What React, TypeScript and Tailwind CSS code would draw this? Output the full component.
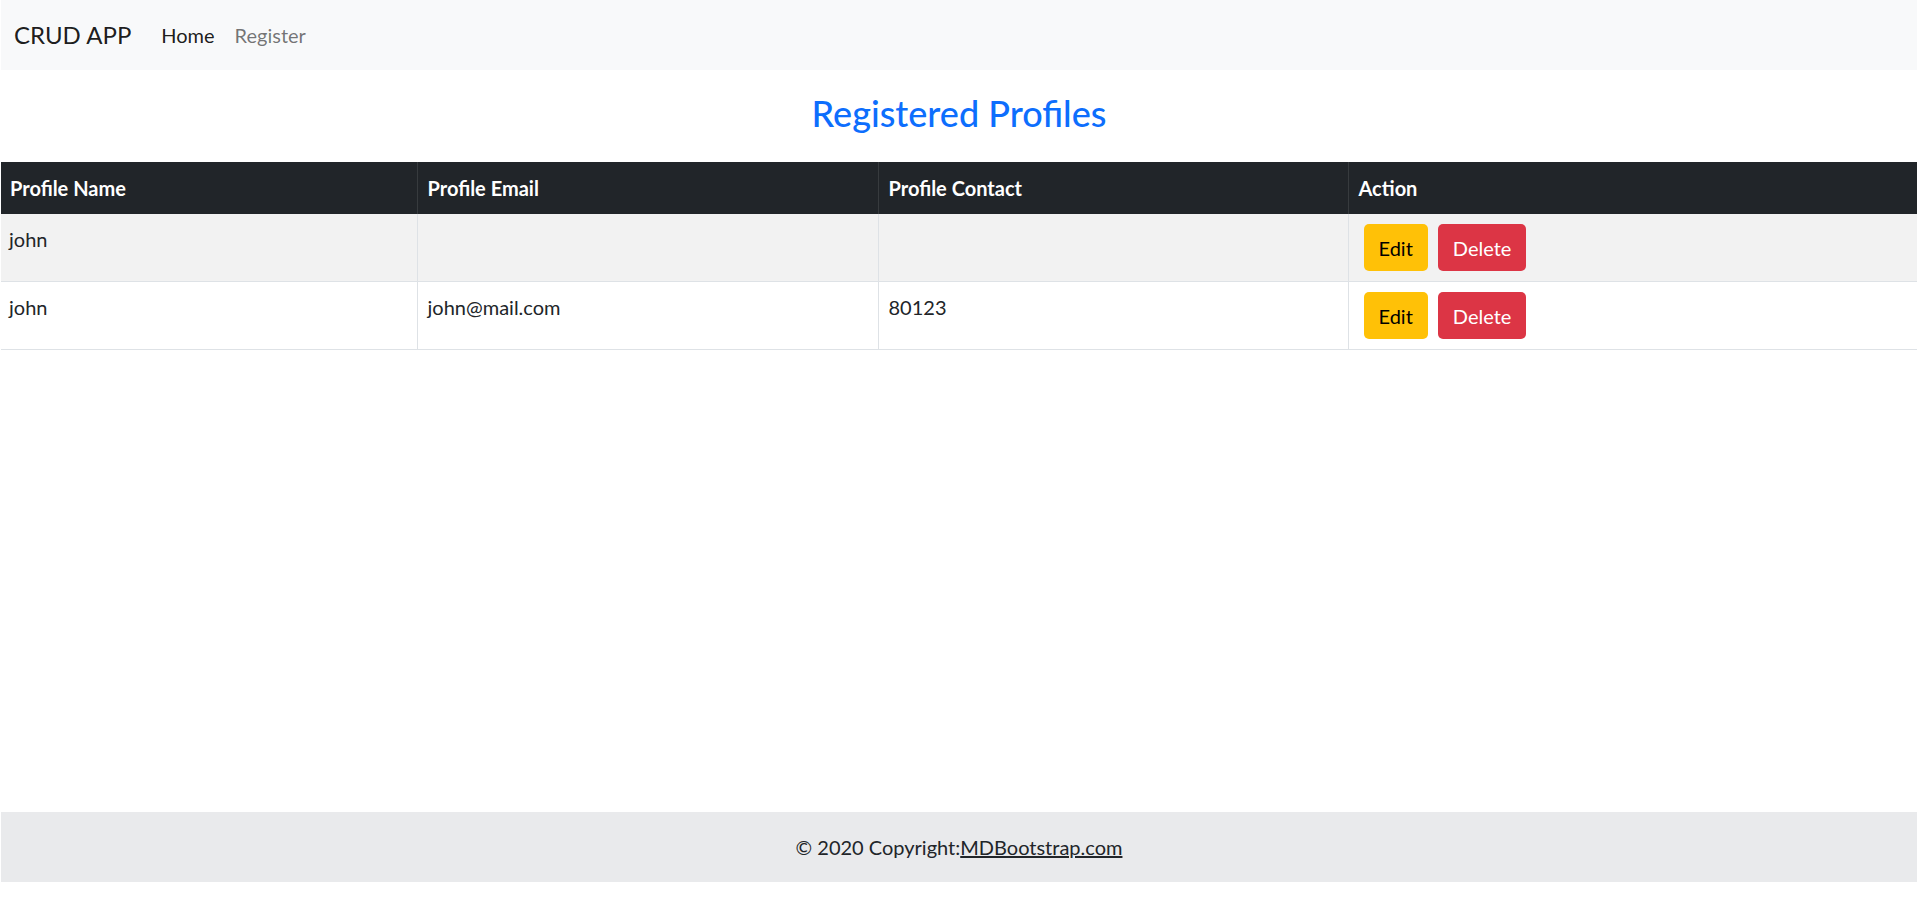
const profiles = [
  { name: "john", email: "", contact: "" },
  { name: "john", email: "john@mail.com", contact: "80123" },
]

function Navbar() {
  return (
    <nav className="h-[70px] bg-[#f8f9fa] flex items-center px-[13px]">
      <span className="text-[24px] leading-[36px] text-black/90 mr-[20px]">CRUD APP</span>
      <a className="text-[20px] leading-[30px] px-[10px] text-black/90">Home</a>
      <a className="text-[20px] leading-[30px] px-[10px] text-black/55">Register</a>
    </nav>
  )
}

function ProfileTable() {
  return (
    <table className="w-full border-collapse text-[20px] leading-[30px] text-[#212529]">
      <thead>
        <tr className="bg-[#212529] text-white font-bold">
          <th className="w-[416px] text-left align-bottom px-[9px] py-[11px] border-r border-[#373b3e]">Profile Name</th>
          <th className="w-[461px] text-left align-bottom px-[10px] py-[11px] border-r border-[#373b3e]">Profile Email</th>
          <th className="w-[470px] text-left align-bottom px-[10px] py-[11px] border-r border-[#373b3e]">Profile Contact</th>
          <th className="text-left align-bottom px-[10px] py-[11px]">Action</th>
        </tr>
      </thead>
      <tbody>
        {profiles.map((p, i) => (
          <tr key={i} className={i % 2 === 0 ? "bg-[#f2f2f2] border-b border-[#dee2e6]" : "bg-white border-b border-[#dee2e6]"}>
            <td className="align-top px-[8px] py-[10px] border-r border-[#dee2e6]">{p.name}</td>
            <td className="align-top px-[10px] py-[10px] border-r border-[#dee2e6]">{p.email}</td>
            <td className="align-top px-[10px] py-[10px] border-r border-[#dee2e6]">{p.contact}</td>
            <td className="align-top px-[15px] py-[10px]">
              <div className="flex gap-[10px]">
                <button className="h-[47px] px-[15px] rounded-[5px] bg-[#ffc107] text-black">Edit</button>
                <button className="h-[47px] px-[15px] rounded-[5px] bg-[#dc3545] text-white">Delete</button>
              </div>
            </td>
          </tr>
        ))}
      </tbody>
    </table>
  )
}

export default function App() {
  return (
    <div className="min-h-[920px] bg-white px-px font-['Lato','Noto_Sans',sans-serif]">
      <Navbar />
      <main className="min-h-[742px]">
        <h2 className="pt-[19px] pb-[25px] text-center text-[36px] leading-[48px] font-medium text-[#0d6efd]">
          Registered Profiles
        </h2>
        <ProfileTable />
      </main>
      <footer className="h-[70px] bg-[#e9eaec] flex items-center justify-center text-[20px] leading-[30px] text-[#212529]">
        © 2020 Copyright:<a className="underline text-[#212529]">MDBootstrap.com</a>
      </footer>
    </div>
  )
}
